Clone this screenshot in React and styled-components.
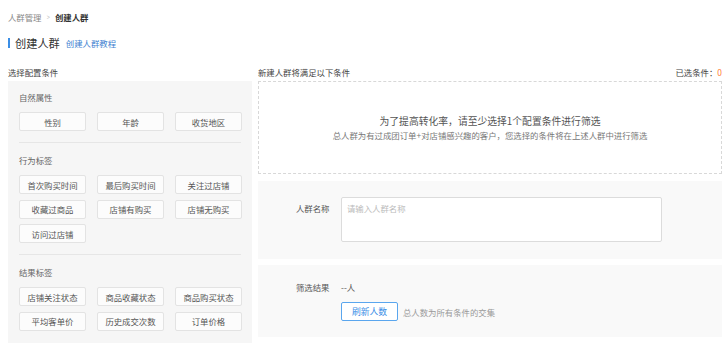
import styled, { createGlobalStyle } from "styled-components";

const GlobalStyle = createGlobalStyle`
  html, body {
    margin: 0;
    padding: 0;
    background: #fff;
  }
  body {
    font-family: "Noto Sans CJK SC", "Microsoft YaHei", sans-serif;
    color: #333;
  }
  * { box-sizing: border-box; }
`;

const tags = [
    { title: "自然属性", items: ["性别", "年龄", "收货地区"] },
    { title: "行为标签", items: ["首次购买时间", "最后购买时间", "关注过店铺", "收藏过商品", "店铺有购买", "店铺无购买", "访问过店铺"] },
    { title: "结果标签", items: ["店铺关注状态", "商品收藏状态", "商品购买状态", "平均客单价", "历史成交次数", "订单价格"] },
];

function App() {
    return (
        <Page>
            <GlobalStyle />
            <Breadcrumb>
                <span className="crumb">人群管理</span>
                <span className="sep">&gt;</span>
                <span className="current">创建人群</span>
            </Breadcrumb>
            <TitleRow>
                <h1>创建人群</h1>
                <a href="#">创建人群教程</a>
            </TitleRow>
            <Columns>
                <div>
                    <ColumnHead>
                        <span>选择配置条件</span>
                    </ColumnHead>
                    <TagPanel>
                        {tags.map((g) => (
                            <TagGroup key={g.title}>
                                <GroupTitle>{g.title}</GroupTitle>
                                <TagGrid>
                                    {g.items.map((t) => (
                                        <TagButton key={t}>{t}</TagButton>
                                    ))}
                                </TagGrid>
                            </TagGroup>
                        ))}
                    </TagPanel>
                </div>
                <div>
                    <ColumnHead>
                        <span>新建人群将满足以下条件</span>
                        <span>已选条件：<Count>0</Count></span>
                    </ColumnHead>
                    <EmptyBox>
                        <p className="main">为了提高转化率，请至少选择1个配置条件进行筛选</p>
                        <p className="sub">总人群为有过成团订单+对店铺感兴趣的客户，您选择的条件将在上述人群中进行筛选</p>
                    </EmptyBox>
                    <FormBox $height={78}>
                        <FormRow>
                            <Label>人群名称</Label>
                            <NameInput placeholder="请输入人群名称" />
                        </FormRow>
                    </FormBox>
                    <FormBox $height={72} $gap={6}>
                        <FormRow>
                            <Label>筛选结果</Label>
                            <div>
                                <ResultValue>--人</ResultValue>
                                <RefreshRow>
                                    <RefreshButton>刷新人数</RefreshButton>
                                    <Hint>总人数为所有条件的交集</Hint>
                                </RefreshRow>
                            </div>
                        </FormRow>
                    </FormBox>
                </div>
            </Columns>
        </Page>
    );
}

const Page = styled.div`
  padding: 10px 4px 0 8px;
  width: 726px;
  height: 345px;
  overflow: hidden;
`;

const Breadcrumb = styled.div`
  display: flex;
  align-items: center;
  height: 14px;
  font-size: 8.4px;
  line-height: 14px;
  .crumb { color: #888; }
  .sep {
    color: #bbb;
    margin: 0 5px 0 4px;
    font-size: 8px;
    transform: scaleX(0.7);
  }
  .current { color: #333; font-weight: bold; }
`;

const TitleRow = styled.div`
  display: flex;
  align-items: center;
  margin-top: 12px;
  height: 14px;
  h1 {
    margin: 0;
    padding-left: 5px;
    border-left: 2px solid #3a8ee6;
    font-size: 11.2px;
    line-height: 10px;
    font-weight: normal;
    color: #333;
  }
  a {
    margin-left: 6px;
    font-size: 8.4px;
    color: #3c7fd0;
    text-decoration: none;
  }
`;

const Columns = styled.div`
  display: grid;
  grid-template-columns: 244px 464px;
  column-gap: 6px;
  margin-top: 14px;
`;

const ColumnHead = styled.div`
  display: flex;
  justify-content: space-between;
  align-items: center;
  height: 17px;
  font-size: 8.4px;
  color: #444;
  padding-bottom: 1px;
`;

const Count = styled.span`
  color: #ff7a2f;
`;

const TagPanel = styled.div`
  background: #f6f6f6;
  padding: 10px 11px 12px;
  min-height: 262px;
`;

const TagGroup = styled.div`
  padding: 11px 0;
  border-bottom: 1px solid #e6e6e6;
  &:first-child { padding-top: 0; }
  &:last-child { border-bottom: none; padding-bottom: 0; }
`;

const GroupTitle = styled.div`
  font-size: 8.4px;
  line-height: 12px;
  color: #666;
  margin-bottom: 9px;
`;

const TagGrid = styled.div`
  display: grid;
  grid-template-columns: repeat(3, 67px);
  column-gap: 11px;
  row-gap: 5.5px;
`;

const TagButton = styled.button`
  height: 19px;
  padding: 0;
  background: #fcfcfc;
  border: 1px solid #e3e3e3;
  border-radius: 2px;
  font-family: inherit;
  font-size: 8.4px;
  color: #555;
  cursor: pointer;
`;

const EmptyBox = styled.div`
  height: 93px;
  border: 1px dashed #d8d8d8;
  background: #fff;
  display: flex;
  flex-direction: column;
  align-items: center;
  justify-content: center;
  p { margin: 0; line-height: 14px; color: #666; }
  .main { font-size: 9.8px; color: #555; }
  .sub { font-size: 8.4px; color: #777; }
`;

const FormBox = styled.div`
  margin-top: ${(p) => p.$gap || 7}px;
  height: ${(p) => p.$height}px;
  background: #f9f9f9;
  padding: 16px 0 0 38px;
`;

const FormRow = styled.div`
  display: flex;
  align-items: flex-start;
`;

const Label = styled.div`
  width: 45px;
  font-size: 8.4px;
  line-height: 12px;
  padding-top: 5px;
  color: #555;
  flex-shrink: 0;
  ${FormBox}:last-child & { padding-top: 0; }
`;

const NameInput = styled.textarea`
  width: 321px;
  height: 45px;
  border: 1px solid #dcdcdc;
  border-radius: 2px;
  background: #fff;
  resize: none;
  padding: 4px 5px;
  font-family: inherit;
  font-size: 8.4px;
  line-height: 12px;
  outline: none;
  &::placeholder { color: #bbb; }
`;

const ResultValue = styled.div`
  font-size: 8.4px;
  line-height: 12px;
  color: #555;
`;

const RefreshRow = styled.div`
  display: flex;
  align-items: center;
  margin-top: 9px;
`;

const RefreshButton = styled.button`
  width: 57px;
  height: 19px;
  padding: 0;
  background: #fff;
  border: 1px solid #5aa6ee;
  border-radius: 2px;
  color: #3a8ee6;
  font-family: inherit;
  font-size: 8.8px;
  cursor: pointer;
`;

const Hint = styled.span`
  margin-left: 5px;
  font-size: 8.4px;
  color: #999;
`;

export default App;
